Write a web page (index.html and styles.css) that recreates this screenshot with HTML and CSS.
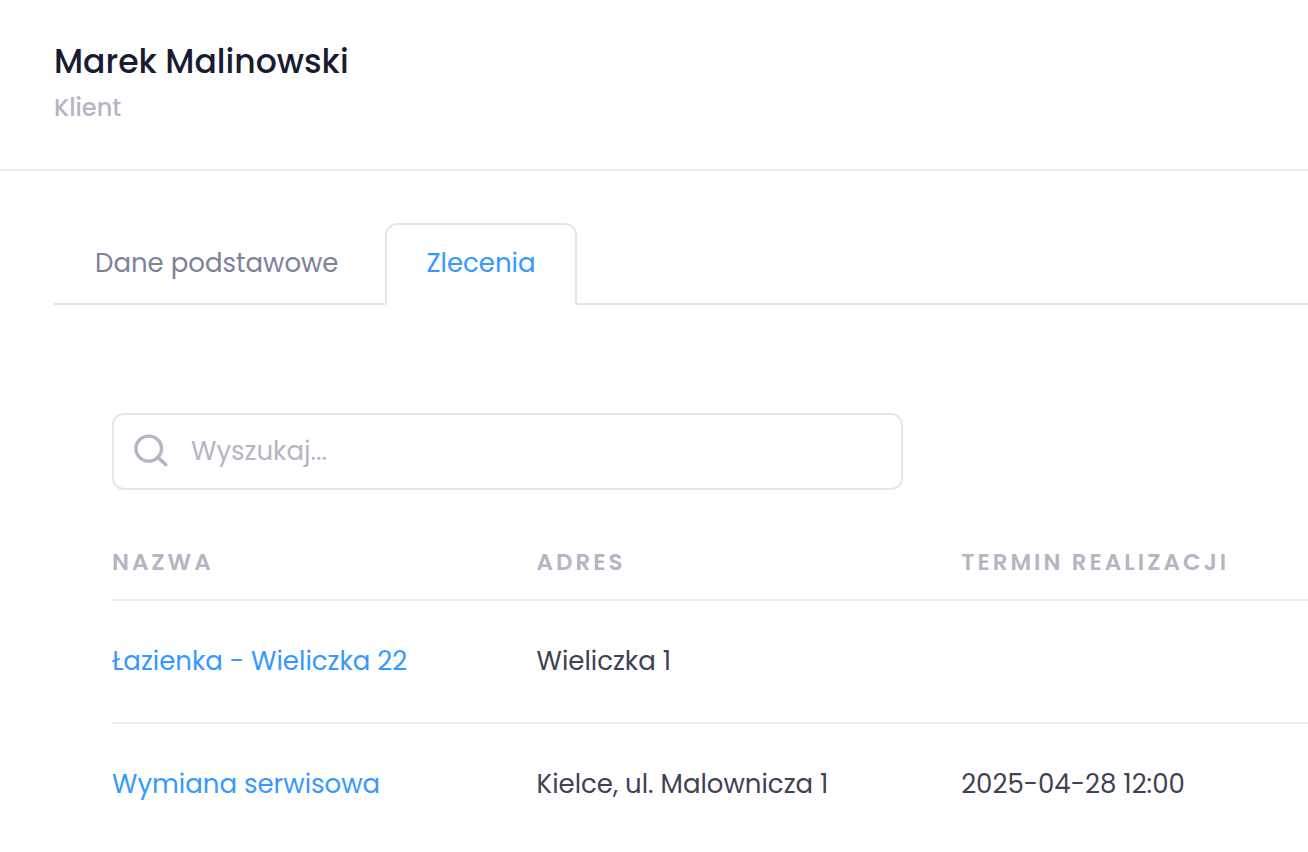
FILE: index.html
```html
<!DOCTYPE html>
<html lang="pl">

<head>
    <meta charset="UTF-8">
    <meta name="viewport" content="width=device-width, initial-scale=1.0">
    <title>Marek Malinowski - Klient</title>
    <link rel="stylesheet" href="styles.css">
</head>

<body>
    <header class="page-header">
        <h1 class="page-title">Marek Malinowski</h1>
        <p class="page-subtitle">Klient</p>
    </header>

    <main class="content">
        <nav class="tabs">
            <a class="tab" href="#dane">Dane podstawowe</a>
            <a class="tab active" href="#zlecenia" aria-current="page">Zlecenia</a>
        </nav>

        <section class="orders" id="zlecenia">
            <div class="search">
                <label class="search-icon" for="search" aria-label="Wyszukaj">
                    <svg width="36" height="36" viewBox="0 0 36 36" fill="none" stroke="currentColor">
                        <ellipse cx="14.7" cy="15.6" rx="12.8" ry="12.5" stroke-width="3.4" />
                        <path d="M23.8 24.2L31.8 31.6" stroke-width="3.6" stroke-linecap="round" />
                    </svg>
                </label>
                <input type="text" id="search" class="search-input" placeholder="Wyszukaj...">
            </div>

            <table class="orders-table">
                <thead>
                    <tr>
                        <th class="col-name">Nazwa</th>
                        <th class="col-address">Adres</th>
                        <th>Termin realizacji</th>
                    </tr>
                </thead>
                <tbody>
                    <tr>
                        <td><a href="#lazienka">Łazienka - Wieliczka 22</a></td>
                        <td>Wieliczka 1</td>
                        <td></td>
                    </tr>
                    <tr>
                        <td><a href="#wymiana">Wymiana serwisowa</a></td>
                        <td>Kielce, ul. Malownicza 1</td>
                        <td>2025-04-28 12:00</td>
                    </tr>
                </tbody>
            </table>
        </section>
    </main>
</body>

</html>
```

FILE: styles.css
```css
* {
    box-sizing: border-box;
}

body {
    margin: 0;
    font-family: Poppins, Inter, "Liberation Sans", sans-serif;
    font-size: 26px;
    line-height: 40px;
    color: #3f4254;
    background-color: #ffffff;
}

a {
    color: #3699ff;
    text-decoration: none;
}

.page-header {
    padding: 40px 54px 43px;
    border-bottom: 2px solid #ebedf3;
}

.page-title {
    margin: 0;
    font-size: 33px;
    font-weight: 500;
    line-height: 44px;
    color: #181c32;
}

.page-subtitle {
    margin: 0;
    padding-top: 6px;
    font-size: 24px;
    font-weight: 500;
    line-height: 36px;
    color: #b5b5c3;
}

.content {
    padding: 52px 0 0 54px;
}

.tabs {
    display: flex;
    border-bottom: 2px solid #e4e6ef;
}

.tab {
    margin-bottom: -2px;
    padding: 18px 39px 20px;
    border: 2px solid transparent;
    color: #7e8299;
}

.tab.active {
    margin-left: 6px;
    border-color: #e4e6ef #e4e6ef #ffffff;
    border-radius: 12px 12px 0 0;
    background-color: #ffffff;
    color: #3699ff;
}

.orders {
    padding: 108px 0 0 58px;
}

.search {
    display: flex;
    align-items: center;
    width: calc(66% + 2px);
    height: 77px;
    padding-bottom: 1px;
    border: 2px solid #e4e6ef;
    border-radius: 12px;
    color: #b5b5c3;
}

.search-icon {
    display: flex;
    padding: 0 21px 0 20px;
}

.search-input {
    flex: 1;
    min-width: 0;
    padding: 0;
    border: 0;
    outline: 0;
    background: none;
    font: inherit;
    color: #3f4254;
}

.search-input::placeholder {
    color: #b5b5c3;
    opacity: 1;
}

.orders-table {
    width: 100%;
    margin-top: 32px;
    border-collapse: collapse;
    table-layout: fixed;
}

.col-name,
.col-address {
    width: 35.5%;
}

.orders-table th {
    height: 78px;
    padding: 2px 0 0;
    border-bottom: 2px solid #ebedf3;
    font-size: 23px;
    font-weight: 600;
    letter-spacing: 3px;
    text-align: left;
    text-transform: uppercase;
    color: #b5b5c3;
}

.orders-table td {
    height: 123px;
    padding: 0 0 2px;
    border-bottom: 2px solid #ebedf3;
}

.orders-table tbody tr:last-child td {
    border-bottom: 0;
}
```
